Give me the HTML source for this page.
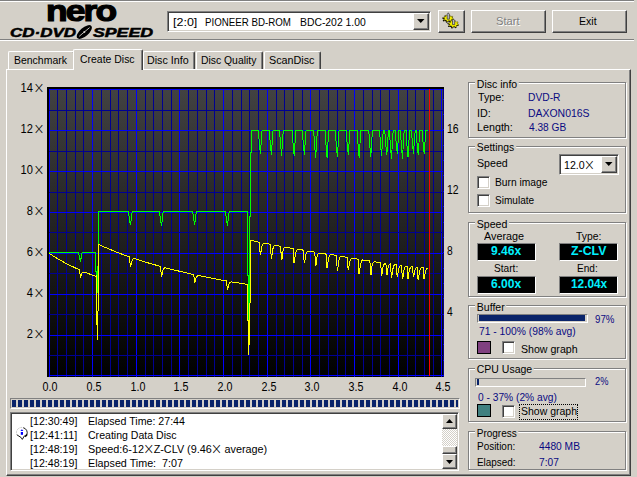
<!DOCTYPE html>
<html><head><meta charset="utf-8"><title>Nero CD-DVD Speed</title>
<style>
html,body{margin:0;padding:0;}
body{width:637px;height:477px;overflow:hidden;background:#d4d0c8;position:relative;font-family:"Liberation Sans",sans-serif;font-size:11.4px;color:#000;}
.t{position:absolute;white-space:nowrap;line-height:14px;}
.x{font-family:"DejaVu Sans Light","DejaVu Sans",sans-serif;font-weight:200;font-size:15px;line-height:1px;position:relative;top:1px;margin-left:0.5px;margin-right:-2px;}
.x2{font-family:"DejaVu Sans Light","DejaVu Sans",sans-serif;font-weight:200;font-size:15px;line-height:1px;position:relative;top:1px;margin:0 -1px;}
.p{position:absolute;}
.btn{position:absolute;box-sizing:border-box;border:1px solid;border-color:#fff #404040 #404040 #fff;box-shadow:inset -1px -1px 0 #808080;background:#d4d0c8;}
.sunk{position:absolute;box-sizing:border-box;border:1px solid;border-color:#808080 #fff #fff #808080;box-shadow:inset 1px 1px 0 #404040, inset -1px -1px 0 #d4d0c8;background:#fff;}
.thin{position:absolute;box-sizing:border-box;border:1px solid;border-color:#808080 #fff #fff #808080;}
.grp{position:absolute;box-sizing:border-box;border:1px solid #808080;box-shadow:inset 1px 1px 0 #fff, 1px 1px 0 #fff;}
.lcd{position:absolute;box-sizing:border-box;background:#000;border:1px solid;border-color:#808080 #fff #fff #808080;}
.plot{position:absolute;left:47px;top:87px;}
.tab{position:absolute;box-sizing:border-box;border:1px solid;border-color:#fff #404040 transparent #fff;border-bottom:none;border-radius:2px 2px 0 0;box-shadow:inset -1px 0 0 #808080;background:#d4d0c8;}
</style></head><body>
<!-- top lines -->
<div class="p" style="left:0;top:0;width:634px;height:1px;background:#808080"></div>
<div class="p" style="left:0;top:1px;width:634px;height:1px;background:#fff"></div>
<div class="p" style="left:0;top:39px;width:634px;height:1px;background:#808080"></div>
<div class="p" style="left:0;top:40px;width:634px;height:1px;background:#fff"></div>
<!-- logo -->
<div class="t" id="nero" style="left:46px;top:-8.6px;font-size:30px;line-height:40px;font-weight:bold;letter-spacing:-1.6px;-webkit-text-stroke:1.2px #000;transform:scaleX(1.18);transform-origin:0 0;">nero</div>
<div class="t" style="left:10px;top:24.5px;font-size:12.3px;line-height:16px;font-weight:bold;font-style:italic;-webkit-text-stroke:0.5px #000;transform:scaleX(1.38);transform-origin:0 0;">CD·DVD</div>
<div class="t" style="left:93px;top:24.5px;font-size:12.3px;line-height:16px;font-weight:bold;font-style:italic;-webkit-text-stroke:0.5px #000;transform:scaleX(1.44);transform-origin:0 0;">SPEED</div>
<svg class="p" style="left:74px;top:24px" width="22" height="16" viewBox="0 0 22 16"><ellipse cx="10.3" cy="8" rx="9.3" ry="4.3" transform="rotate(-41 10.3 8)" fill="#000"/><path d="M5.2 12.3 L15.6 3.6" stroke="#d4d0c8" stroke-width="0.9"/><circle cx="10.3" cy="8" r="1" fill="#d4d0c8"/></svg>
<!-- combo -->
<div class="sunk" style="left:167px;top:11px;width:264px;height:21px;"></div>
<div class="btn" style="left:413px;top:13px;width:16px;height:17px;"></div>
<svg class="p" style="left:417px;top:19px" width="8" height="4"><polygon points="0,0 7.5,0 3.75,4" fill="#000"/></svg>
<!-- buttons -->
<div class="btn" style="left:438px;top:10px;width:27px;height:23px;"></div>
<div class="btn" style="left:471px;top:10px;width:75px;height:23px;"></div>
<div class="btn" style="left:552px;top:10px;width:75px;height:23px;"></div>
<!-- gear icon -->
<svg class="p" style="left:438px;top:10px" width="27" height="23" viewBox="0 0 27 23">
<path d="M14.02 8.90 L15.47 9.27 L15.15 10.25 L13.60 10.15 L12.78 10.94 L13.43 11.91 L12.19 12.44 L11.20 11.62 L9.80 11.79 L9.26 12.78 L7.83 12.56 L7.97 11.50 L6.82 10.94 L5.41 11.39 L4.62 10.53 L5.82 9.86 L5.58 8.90 L4.13 8.53 L4.45 7.55 L6.00 7.65 L6.82 6.86 L6.17 5.89 L7.41 5.36 L8.40 6.18 L9.80 6.01 L10.34 5.02 L11.77 5.24 L11.63 6.30 L12.78 6.86 L14.19 6.41 L14.98 7.27 L13.78 7.94Z" fill="#000"/><path d="M14.15 8.30 L15.48 8.62 L15.18 9.48 L13.77 9.39 L13.02 10.08 L13.61 10.92 L12.48 11.39 L11.57 10.67 L10.30 10.82 L9.81 11.68 L8.50 11.49 L8.63 10.57 L7.58 10.08 L6.29 10.47 L5.58 9.72 L6.67 9.13 L6.45 8.30 L5.12 7.98 L5.42 7.12 L6.83 7.21 L7.58 6.52 L6.99 5.68 L8.12 5.21 L9.03 5.93 L10.30 5.78 L10.79 4.92 L12.10 5.11 L11.97 6.03 L13.02 6.52 L14.31 6.13 L15.02 6.88 L13.93 7.47Z" fill="#f4f000" stroke="#403800" stroke-width="0.4"/>
<path d="M9.2 9.2 V4.4 L10.3 2.8 L11.4 4.4 V9.2 Z" fill="#b8b8c8" stroke="#303030" stroke-width="0.7"/>
<path d="M19.22 14.50 L20.67 14.89 L20.35 15.92 L18.80 15.81 L17.98 16.65 L18.63 17.66 L17.39 18.22 L16.40 17.36 L15.00 17.53 L14.46 18.58 L13.03 18.35 L13.17 17.24 L12.02 16.65 L10.61 17.11 L9.82 16.22 L11.02 15.51 L10.78 14.50 L9.33 14.11 L9.65 13.08 L11.20 13.19 L12.02 12.35 L11.37 11.34 L12.61 10.78 L13.60 11.64 L15.00 11.47 L15.54 10.42 L16.97 10.65 L16.83 11.76 L17.98 12.35 L19.39 11.89 L20.18 12.78 L18.98 13.49Z" fill="#000"/><path d="M19.35 13.90 L20.68 14.24 L20.38 15.15 L18.97 15.05 L18.22 15.78 L18.81 16.67 L17.68 17.17 L16.77 16.41 L15.50 16.56 L15.01 17.48 L13.70 17.28 L13.83 16.30 L12.78 15.78 L11.49 16.19 L10.78 15.41 L11.87 14.78 L11.65 13.90 L10.32 13.56 L10.62 12.65 L12.03 12.75 L12.78 12.02 L12.19 11.13 L13.32 10.63 L14.23 11.39 L15.50 11.24 L15.99 10.32 L17.30 10.52 L17.17 11.50 L18.22 12.02 L19.51 11.61 L20.22 12.39 L19.13 13.02Z" fill="#f4f000" stroke="#403800" stroke-width="0.4"/>
<path d="M14.5 14.6 V10.6 L15.6 9.2 L16.7 10.6 V14.6 Z" fill="#b8b8c8" stroke="#303030" stroke-width="0.7"/>
</svg>
<!-- tab panel -->
<div class="p" style="left:6px;top:69px;width:625px;height:407px;box-sizing:border-box;border:1px solid;border-color:#fff #404040 #404040 #fff;box-shadow:inset -1px -1px 0 #808080;"></div>
<!-- tabs -->
<div class="tab" style="left:8px;top:51px;width:67px;height:18px;"></div>
<div class="tab" style="left:143px;top:51px;width:52px;height:18px;"></div>
<div class="tab" style="left:196px;top:51px;width:67px;height:18px;"></div>
<div class="tab" style="left:264px;top:51px;width:57px;height:18px;"></div>
<div class="tab" style="left:73px;top:49px;width:70px;height:21px;"></div>
<!-- progress bar -->
<div class="thin" style="left:10px;top:398px;width:450px;height:11px;"></div>
<div class="p" style="left:12px;top:400px;width:446px;height:7px;background:repeating-linear-gradient(90deg,#0a246a 0,#0a246a 4px,#d4d0c8 4px,#d4d0c8 6px);"></div>
<!-- log box -->
<div class="sunk" style="left:10px;top:412px;width:449px;height:59px;"></div>
<!-- scrollbar -->
<div class="p" style="left:442px;top:414px;width:15px;height:55px;background:repeating-conic-gradient(#fff 0 25%,#d4d0c8 0 50%) 0 0/2px 2px;"></div>
<div class="btn" style="left:442px;top:414px;width:15px;height:15px;"></div>
<svg class="p" style="left:446px;top:419px" width="7" height="4"><polygon points="0,4 7,4 3.5,0" fill="#000"/></svg>
<div class="btn" style="left:442px;top:446px;width:15px;height:8px;"></div>
<div class="btn" style="left:442px;top:454px;width:15px;height:15px;"></div>
<svg class="p" style="left:446px;top:460px" width="7" height="4"><polygon points="0,0 7,0 3.5,4" fill="#000"/></svg>
<!-- log icon -->
<svg class="p" style="left:15px;top:426px" width="15" height="16" viewBox="0 0 15 16"><circle cx="6.9" cy="6.8" r="5.2" fill="#fff"/><path d="M8.2 1.7 A5.2 5.2 0 0 1 11.9 8.6 L10.4 10.6 L9.4 9.9 L7.3 13.4 L6.2 11.6 L1.9 8.8" fill="none" stroke="#000" stroke-width="0.9"/><path d="M10.3 10.4 L12 8.4" stroke="#000" stroke-width="1.6"/><path d="M1.9 8.8 A5.2 5.2 0 0 1 8.2 1.7" fill="none" stroke="#a0a0a0" stroke-width="0.9" stroke-dasharray="1 1.3"/><path d="M5.4 4.9 L6.9 3.2 L8.4 4.9 Z" fill="#0000ff"/><rect x="5.8" y="6" width="2.2" height="2.8" fill="#0000ff"/></svg>
<!-- right groups -->
<div class="grp" style="left:468px;top:82px;width:158px;height:56px;"></div>
<div class="grp" style="left:468px;top:146px;width:158px;height:67px;"></div>
<div class="grp" style="left:468px;top:222px;width:158px;height:75px;"></div>
<div class="grp" style="left:468px;top:305px;width:158px;height:54px;"></div>
<div class="grp" style="left:468px;top:368px;width:158px;height:54px;"></div>
<div class="grp" style="left:468px;top:431px;width:158px;height:39px;"></div>
<!-- settings -->
<div class="sunk" style="left:559px;top:154px;width:60px;height:21px;"></div>
<div class="btn" style="left:601px;top:156px;width:16px;height:17px;"></div>
<svg class="p" style="left:605px;top:162px" width="8" height="4"><polygon points="0,0 7.5,0 3.75,4" fill="#000"/></svg>
<div class="sunk" style="left:477px;top:176px;width:13px;height:13px;"></div>
<div class="sunk" style="left:477px;top:194px;width:13px;height:13px;"></div>
<!-- speed LCDs -->
<div class="lcd" style="left:477px;top:243px;width:59px;height:18px;"></div>
<div class="lcd" style="left:559px;top:243px;width:59px;height:18px;"></div>
<div class="lcd" style="left:477px;top:276px;width:59px;height:18px;"></div>
<div class="lcd" style="left:559px;top:276px;width:59px;height:18px;"></div>
<!-- buffer -->
<div class="thin" style="left:477px;top:314px;width:111px;height:9px;"></div>
<div class="p" style="left:479px;top:315px;width:106px;height:6px;background:#0a246a;"></div>
<div class="p" style="left:477px;top:341px;width:14px;height:13px;box-sizing:border-box;border:1px solid #000;background:#804080;"></div>
<div class="sunk" style="left:502px;top:341px;width:13px;height:13px;"></div>
<!-- cpu -->
<div class="thin" style="left:475px;top:378px;width:111px;height:9px;"></div>
<div class="p" style="left:477px;top:379px;width:2px;height:6px;background:#0a246a;"></div>
<div class="p" style="left:477px;top:404px;width:14px;height:13px;box-sizing:border-box;border:1px solid #000;background:#408080;"></div>
<div class="sunk" style="left:502px;top:405px;width:13px;height:13px;"></div>
<div class="p" style="left:519px;top:404px;width:59px;height:16px;box-sizing:border-box;border:1px dotted #000;"></div>

<svg class="plot" width="397" height="290" viewBox="47 87 397 290">
<defs><linearGradient id="bg" x1="0" y1="0" x2="0" y2="1"><stop offset="0" stop-color="#424242"/><stop offset="1" stop-color="#000"/></linearGradient></defs>
<rect x="47" y="87" width="398" height="291" fill="#000"/>
<rect x="49" y="89" width="394" height="288" fill="url(#bg)"/>
<g shape-rendering="crispEdges"><rect x="49" y="89" width="1" height="288" fill="#0000ff"/>
<rect x="57" y="89" width="1" height="288" fill="#000092"/>
<rect x="66" y="89" width="1" height="288" fill="#000092"/>
<rect x="75" y="89" width="1" height="288" fill="#000092"/>
<rect x="83" y="89" width="1" height="288" fill="#000092"/>
<rect x="92" y="89" width="1" height="288" fill="#0000ff"/>
<rect x="101" y="89" width="1" height="288" fill="#000092"/>
<rect x="110" y="89" width="1" height="288" fill="#000092"/>
<rect x="118" y="89" width="1" height="288" fill="#000092"/>
<rect x="127" y="89" width="1" height="288" fill="#000092"/>
<rect x="136" y="89" width="1" height="288" fill="#0000ff"/>
<rect x="145" y="89" width="1" height="288" fill="#000092"/>
<rect x="153" y="89" width="1" height="288" fill="#000092"/>
<rect x="162" y="89" width="1" height="288" fill="#000092"/>
<rect x="171" y="89" width="1" height="288" fill="#000092"/>
<rect x="179" y="89" width="1" height="288" fill="#0000ff"/>
<rect x="188" y="89" width="1" height="288" fill="#000092"/>
<rect x="197" y="89" width="1" height="288" fill="#000092"/>
<rect x="206" y="89" width="1" height="288" fill="#000092"/>
<rect x="214" y="89" width="1" height="288" fill="#000092"/>
<rect x="223" y="89" width="1" height="288" fill="#0000ff"/>
<rect x="232" y="89" width="1" height="288" fill="#000092"/>
<rect x="241" y="89" width="1" height="288" fill="#000092"/>
<rect x="249" y="89" width="1" height="288" fill="#000092"/>
<rect x="258" y="89" width="1" height="288" fill="#000092"/>
<rect x="267" y="89" width="1" height="288" fill="#0000ff"/>
<rect x="276" y="89" width="1" height="288" fill="#000092"/>
<rect x="284" y="89" width="1" height="288" fill="#000092"/>
<rect x="293" y="89" width="1" height="288" fill="#000092"/>
<rect x="302" y="89" width="1" height="288" fill="#000092"/>
<rect x="310" y="89" width="1" height="288" fill="#0000ff"/>
<rect x="319" y="89" width="1" height="288" fill="#000092"/>
<rect x="328" y="89" width="1" height="288" fill="#000092"/>
<rect x="337" y="89" width="1" height="288" fill="#000092"/>
<rect x="345" y="89" width="1" height="288" fill="#000092"/>
<rect x="354" y="89" width="1" height="288" fill="#0000ff"/>
<rect x="363" y="89" width="1" height="288" fill="#000092"/>
<rect x="372" y="89" width="1" height="288" fill="#000092"/>
<rect x="380" y="89" width="1" height="288" fill="#000092"/>
<rect x="389" y="89" width="1" height="288" fill="#000092"/>
<rect x="398" y="89" width="1" height="288" fill="#0000ff"/>
<rect x="407" y="89" width="1" height="288" fill="#000092"/>
<rect x="415" y="89" width="1" height="288" fill="#000092"/>
<rect x="424" y="89" width="1" height="288" fill="#000092"/>
<rect x="433" y="89" width="1" height="288" fill="#000092"/>
<rect x="441" y="89" width="1" height="288" fill="#0000ff"/>
<rect x="49" y="375" width="394" height="1" fill="#0000ff"/>
<rect x="49" y="355" width="394" height="1" fill="#000092"/>
<rect x="49" y="335" width="394" height="1" fill="#0000ff"/>
<rect x="49" y="314" width="394" height="1" fill="#000092"/>
<rect x="49" y="294" width="394" height="1" fill="#0000ff"/>
<rect x="49" y="273" width="394" height="1" fill="#000092"/>
<rect x="49" y="253" width="394" height="1" fill="#0000ff"/>
<rect x="49" y="232" width="394" height="1" fill="#000092"/>
<rect x="49" y="212" width="394" height="1" fill="#0000ff"/>
<rect x="49" y="192" width="394" height="1" fill="#000092"/>
<rect x="49" y="171" width="394" height="1" fill="#0000ff"/>
<rect x="49" y="151" width="394" height="1" fill="#000092"/>
<rect x="49" y="130" width="394" height="1" fill="#0000ff"/>
<rect x="49" y="110" width="394" height="1" fill="#000092"/>
<rect x="49" y="89" width="394" height="1" fill="#0000ff"/>
<rect x="443" y="375" width="1" height="1" fill="#0000ff"/>
<rect x="443" y="360" width="1" height="1" fill="#0000ff"/>
<rect x="443" y="344" width="1" height="1" fill="#0000ff"/>
<rect x="443" y="329" width="1" height="1" fill="#0000ff"/>
<rect x="443" y="314" width="1" height="1" fill="#0000ff"/>
<rect x="443" y="298" width="1" height="1" fill="#0000ff"/>
<rect x="443" y="283" width="1" height="1" fill="#0000ff"/>
<rect x="443" y="268" width="1" height="1" fill="#0000ff"/>
<rect x="443" y="252" width="1" height="1" fill="#0000ff"/>
<rect x="443" y="237" width="1" height="1" fill="#0000ff"/>
<rect x="443" y="222" width="1" height="1" fill="#0000ff"/>
<rect x="443" y="206" width="1" height="1" fill="#0000ff"/>
<rect x="443" y="191" width="1" height="1" fill="#0000ff"/>
<rect x="443" y="175" width="1" height="1" fill="#0000ff"/>
<rect x="443" y="160" width="1" height="1" fill="#0000ff"/>
<rect x="443" y="145" width="1" height="1" fill="#0000ff"/>
<rect x="443" y="129" width="1" height="1" fill="#0000ff"/>
<rect x="443" y="114" width="1" height="1" fill="#0000ff"/>
<rect x="443" y="99" width="1" height="1" fill="#0000ff"/></g>
<rect x="443" y="89" width="0.5" height="288" fill="#0000ff"/>
<polyline points="49.0,252.4 78.5,252.4 79.2,256.5 80.5,261.5 81.3,256.9 82.2,252.4 95.7,252.4 95.7,271.0 96.6,271.0 96.6,292.0 97.4,292.0 97.6,271.0 98.6,260.0 98.6,211.5 128.5,211.5 129.2,217.8 130.5,225.4 131.3,218.4 132.2,211.5 159.5,211.5 160.2,218.2 161.5,226.4 162.3,218.9 163.2,211.5 192.7,211.5 193.4,217.5 194.7,224.8 195.5,218.2 196.4,211.5 225.5,211.5 226.2,218.0 227.5,225.9 228.3,218.7 229.2,211.5 247.6,211.5 247.6,275.0 248.5,275.0 248.5,331.6 249.5,288.0 249.5,216.5 250.8,216.5 250.8,152.5 251.5,152.5 251.5,130.2 258.4,130.2 259.1,140.8 260.4,153.7 261.2,141.9 262.1,130.2 269.4,130.2 270.1,141.1 271.4,154.5 272.2,142.3 273.1,130.2 279.6,130.2 280.3,141.7 281.6,155.8 282.4,143.0 283.3,130.2 292.2,130.2 292.9,142.0 294.2,156.4 295.0,143.3 295.9,130.2 302.4,130.2 303.1,141.1 304.4,154.5 305.2,142.3 306.1,130.2 313.7,130.2 314.4,142.6 315.7,157.7 316.5,143.9 317.4,130.2 325.1,130.2 325.8,142.6 327.1,157.7 327.9,143.9 328.8,130.2 335.4,130.2 336.1,142.4 337.4,157.4 338.2,143.8 339.1,130.2 346.3,130.2 347.0,141.5 348.3,155.3 349.1,142.8 350.0,130.2 357.2,130.2 357.9,142.6 359.2,157.7 360.0,143.9 360.9,130.2 368.8,130.2 369.5,142.2 370.8,156.9 371.6,143.6 372.5,130.2 379.6,130.2 380.3,141.8 381.6,156.0 382.4,143.1 383.3,130.2 384.8,130.2 385.5,141.5 386.8,155.3 387.6,142.8 388.5,130.2 389.5,130.2 390.2,142.9 391.5,158.5 392.3,144.3 393.2,130.2 395.3,130.2 396.0,140.8 397.3,153.8 398.1,142.0 399.0,130.2 400.5,130.2 401.2,142.9 402.5,158.5 403.3,144.3 404.2,130.2 406.0,130.2 406.7,142.3 408.0,157.0 408.8,143.6 409.7,130.2 411.5,130.2 412.2,140.8 413.5,153.8 414.3,142.0 415.2,130.2 416.2,130.2 416.9,141.5 418.2,155.3 419.0,142.8 419.9,130.2 422.2,130.2 422.9,140.8 424.2,153.8 425.0,142.0 425.9,130.2 427.8,130.2" fill="none" stroke="#00ff00" stroke-width="1" shape-rendering="crispEdges"/>
<polyline points="49.0,253.2 52.0,255.2 55.0,257.1 58.0,258.9 61.0,260.6 64.0,262.3 67.0,263.9 70.0,265.4 73.0,266.8 76.0,268.3 79.0,269.6 79.6,269.9 80.3,277.2 80.8,277.2 81.6,273.5 82.8,272.6 83.9,271.9 85.0,272.2 88.0,273.4 91.0,274.6 94.0,275.7 95.2,276.1 96.0,276.0 96.0,324.4 97.4,324.4 97.4,340.3 97.8,324.0 98.3,292.0 98.3,244.7 98.8,244.4 101.8,245.8 104.8,247.2 107.8,248.5 110.8,249.7 113.8,251.0 116.8,252.2 119.8,253.3 122.8,254.5 125.8,255.6 128.8,256.6 129.6,256.9 130.3,266.8 130.8,266.8 131.6,261.5 132.8,259.3 133.9,258.6 134.8,258.7 137.8,259.7 140.8,260.6 143.8,261.6 146.8,262.5 149.8,263.4 152.8,264.3 155.8,265.1 158.8,266.0 160.6,266.5 161.3,276.1 161.8,276.1 162.6,270.8 163.8,268.6 164.9,267.8 167.8,268.4 170.8,269.1 173.8,269.9 176.8,270.6 179.8,271.3 182.8,272.0 185.8,272.7 188.8,273.4 191.8,274.1 193.8,274.5 194.5,282.3 195.0,282.3 195.8,278.0 197.0,276.5 198.1,275.6 200.8,276.0 203.8,276.6 206.8,277.2 209.8,277.8 212.8,278.4 215.8,279.0 218.8,279.5 221.8,280.1 224.8,280.6 226.6,281.0 227.3,289.3 227.8,289.3 228.6,284.7 229.8,282.8 230.9,281.9 233.8,282.2 236.8,282.7 239.8,283.2 242.8,283.7 245.8,284.2 247.6,284.5 247.4,320.0 248.5,320.0 248.5,354.6 249.7,331.6 250.2,288.0 250.4,240.3 251.0,240.2 254.0,240.9 257.0,241.7 259.5,242.3 260.2,254.8 260.7,254.8 261.5,247.8 262.7,244.2 263.8,243.3 266.0,243.5 269.0,244.0 270.5,244.3 271.2,258.0 271.7,258.0 272.5,250.3 273.7,246.2 274.8,245.4 275.0,245.2 278.0,245.8 280.7,246.3 281.4,259.9 281.9,259.9 282.7,252.2 283.9,248.2 285.0,247.3 287.0,247.5 290.0,248.0 293.0,248.6 293.3,248.6 294.0,262.4 294.5,262.4 295.3,254.6 296.5,250.4 297.6,249.5 299.0,249.5 302.0,249.9 303.5,250.2 304.2,262.7 304.7,262.7 305.5,255.6 306.7,252.0 307.8,251.1 308.0,251.0 311.0,251.5 314.0,252.0 314.8,252.1 315.5,265.5 316.0,265.5 316.8,258.0 318.0,254.0 319.1,253.1 320.0,253.0 323.0,253.6 326.0,254.1 326.2,254.1 326.9,267.7 327.4,267.7 328.2,259.9 329.4,255.8 330.5,254.8 332.0,254.8 335.0,255.1 336.5,255.3 337.2,270.3 337.7,270.3 338.5,261.8 339.7,257.2 340.8,256.4 341.0,256.2 344.0,256.8 347.0,257.3 347.4,257.4 348.1,269.2 348.6,269.2 349.4,262.6 350.6,259.3 351.7,258.4 353.0,258.4 356.0,258.9 358.3,259.2 359.0,273.5 359.5,273.5 360.3,265.4 361.5,261.0 362.6,260.0 365.0,260.2 368.0,260.7 369.9,261.0 370.6,274.2 371.1,274.2 371.9,266.7 373.1,262.8 374.2,261.8 377.0,262.1 380.0,262.5 380.7,262.6 381.4,275.0 381.9,275.0 382.7,268.0 383.9,264.4 385.0,263.5 385.9,263.4 386.6,274.2 387.1,274.2 387.9,268.1 389.1,265.1 390.2,264.2 390.6,264.0 391.3,277.4 391.8,277.4 392.6,269.8 393.8,265.8 394.9,264.8 396.4,264.8 397.1,276.6 397.6,276.6 398.4,269.9 399.6,266.4 400.7,265.5 401.0,265.3 401.6,265.4 402.3,278.6 402.8,278.6 403.6,271.0 404.8,267.0 405.9,266.0 407.0,266.0 407.1,266.0 407.8,278.2 408.3,278.2 409.1,271.2 410.3,267.6 411.4,266.6 412.6,266.6 413.3,276.6 413.8,276.6 414.6,270.9 415.8,268.2 416.9,267.2 417.3,267.1 418.0,279.0 418.5,279.0 419.3,272.2 420.5,268.6 421.6,267.6 422.0,267.5 423.3,267.6 424.0,278.6 424.5,278.6 425.3,272.3 426.5,269.1 427.6,268.1 428.0,268.0 428.4,268.0" fill="none" stroke="#ffff00" stroke-width="1" shape-rendering="crispEdges"/>
<rect x="429" y="89" width="1" height="287" fill="#ff0000" shape-rendering="crispEdges"/>
</svg>
<div class="t" style="left:172.8px;top:14.8px;font-size:11.8px;transform:scaleX(1.058);transform-origin:0 0;">[2:0]</div>
<div class="t" style="left:205.4px;top:14.8px;font-size:11.8px;transform:scaleX(0.825);transform-origin:0 0;">PIONEER BD-ROM</div>
<div class="t" style="left:299.9px;top:14.8px;font-size:11.8px;transform:scaleX(0.879);transform-origin:0 0;">BDC-202 1.00</div>
<div class="t" style="left:495.5px;top:13.7px;font-size:11.8px;color:#808080;text-shadow:1px 1px 0 #fff;transform:scaleX(0.943);transform-origin:0 0;">Start</div>
<div class="t" style="left:578.7px;top:13.7px;font-size:11.8px;transform:scaleX(0.895);transform-origin:0 0;">Exit</div>
<div class="t" style="left:14.2px;top:53.3px;font-size:11.8px;transform:scaleX(0.887);transform-origin:0 0;">Benchmark</div>
<div class="t" style="left:80.1px;top:51.7px;font-size:11.8px;transform:scaleX(0.886);transform-origin:0 0;">Create Disc</div>
<div class="t" style="left:146.9px;top:53.3px;font-size:11.8px;transform:scaleX(0.906);transform-origin:0 0;">Disc Info</div>
<div class="t" style="left:201.0px;top:53.3px;font-size:11.8px;transform:scaleX(0.879);transform-origin:0 0;">Disc Quality</div>
<div class="t" style="left:269.2px;top:53.3px;font-size:11.8px;transform:scaleX(0.913);transform-origin:0 0;">ScanDisc</div>
<div class="t" style="left:42.6px;top:326.9px;font-size:12.2px;transform:translateX(-100%) scaleX(0.910);transform-origin:100% 0;">2<span class="x">&#215;</span></div>
<div class="t" style="left:42.6px;top:285.9px;font-size:12.2px;transform:translateX(-100%) scaleX(0.910);transform-origin:100% 0;">4<span class="x">&#215;</span></div>
<div class="t" style="left:42.6px;top:244.9px;font-size:12.2px;transform:translateX(-100%) scaleX(0.910);transform-origin:100% 0;">6<span class="x">&#215;</span></div>
<div class="t" style="left:42.6px;top:203.9px;font-size:12.2px;transform:translateX(-100%) scaleX(0.910);transform-origin:100% 0;">8<span class="x">&#215;</span></div>
<div class="t" style="left:42.6px;top:162.9px;font-size:12.2px;transform:translateX(-100%) scaleX(0.910);transform-origin:100% 0;">10<span class="x">&#215;</span></div>
<div class="t" style="left:42.6px;top:121.9px;font-size:12.2px;transform:translateX(-100%) scaleX(0.910);transform-origin:100% 0;">12<span class="x">&#215;</span></div>
<div class="t" style="left:42.6px;top:80.6px;font-size:12.2px;transform:translateX(-100%) scaleX(0.910);transform-origin:100% 0;">14<span class="x">&#215;</span></div>
<div class="t" style="left:446.6px;top:121.6px;font-size:12.5px;transform:scaleX(0.834);transform-origin:0 0;">16</div>
<div class="t" style="left:446.6px;top:182.6px;font-size:12.5px;transform:scaleX(0.834);transform-origin:0 0;">12</div>
<div class="t" style="left:446.6px;top:243.7px;font-size:12.5px;transform:scaleX(0.820);transform-origin:0 0;">8</div>
<div class="t" style="left:446.6px;top:305.0px;font-size:12.5px;transform:scaleX(0.820);transform-origin:0 0;">4</div>
<div class="t" style="left:50.3px;top:379.9px;font-size:12.0px;transform:translateX(-50%) scaleX(0.893);transform-origin:50% 0;">0.0</div>
<div class="t" style="left:94.0px;top:379.9px;font-size:12.0px;transform:translateX(-50%) scaleX(0.893);transform-origin:50% 0;">0.5</div>
<div class="t" style="left:137.6px;top:379.9px;font-size:12.0px;transform:translateX(-50%) scaleX(0.893);transform-origin:50% 0;">1.0</div>
<div class="t" style="left:181.3px;top:379.9px;font-size:12.0px;transform:translateX(-50%) scaleX(0.893);transform-origin:50% 0;">1.5</div>
<div class="t" style="left:225.0px;top:379.9px;font-size:12.0px;transform:translateX(-50%) scaleX(0.893);transform-origin:50% 0;">2.0</div>
<div class="t" style="left:268.6px;top:379.9px;font-size:12.0px;transform:translateX(-50%) scaleX(0.893);transform-origin:50% 0;">2.5</div>
<div class="t" style="left:312.3px;top:379.9px;font-size:12.0px;transform:translateX(-50%) scaleX(0.893);transform-origin:50% 0;">3.0</div>
<div class="t" style="left:356.0px;top:379.9px;font-size:12.0px;transform:translateX(-50%) scaleX(0.893);transform-origin:50% 0;">3.5</div>
<div class="t" style="left:399.6px;top:379.9px;font-size:12.0px;transform:translateX(-50%) scaleX(0.893);transform-origin:50% 0;">4.0</div>
<div class="t" style="left:443.3px;top:379.9px;font-size:12.0px;transform:translateX(-50%) scaleX(0.893);transform-origin:50% 0;">4.5</div>
<div class="t" style="left:30.1px;top:414.0px;font-size:11.8px;transform:scaleX(0.903);transform-origin:0 0;">[12:30:49]</div>
<div class="t" style="left:88.0px;top:414.0px;font-size:11.8px;transform:scaleX(0.901);transform-origin:0 0;">Elapsed Time: 27:44</div>
<div class="t" style="left:30.1px;top:427.8px;font-size:11.8px;transform:scaleX(0.918);transform-origin:0 0;">[12:41:11]</div>
<div class="t" style="left:88.4px;top:427.8px;font-size:11.8px;transform:scaleX(0.895);transform-origin:0 0;">Creating Data Disc</div>
<div class="t" style="left:30.1px;top:441.7px;font-size:11.8px;transform:scaleX(0.903);transform-origin:0 0;">[12:48:19]</div>
<div class="t" style="left:88.4px;top:441.7px;font-size:11.8px;transform:scaleX(0.917);transform-origin:0 0;">Speed:6-12<span class="x2">&#215;</span>Z-CLV (9.46<span class="x2">&#215;</span> average)</div>
<div class="t" style="left:30.1px;top:455.5px;font-size:11.8px;transform:scaleX(0.903);transform-origin:0 0;">[12:48:19]</div>
<div class="t" style="left:88.0px;top:455.5px;font-size:11.8px;transform:scaleX(0.911);transform-origin:0 0;">Elapsed Time:&nbsp; 7:07</div>
<div class="t" style="left:476.9px;top:76.5px;font-size:11.8px;background:#d4d0c8;padding:0 2px;margin-left:-2px;transform:scaleX(0.893);transform-origin:0 0;">Disc info</div>
<div class="t" style="left:477.7px;top:90.3px;font-size:11.8px;transform:scaleX(0.910);transform-origin:0 0;">Type:</div>
<div class="t" style="left:528.1px;top:90.3px;font-size:11.8px;color:#0a0a82;transform:scaleX(0.870);transform-origin:0 0;">DVD-R</div>
<div class="t" style="left:477.3px;top:106.3px;font-size:11.8px;transform:scaleX(0.910);transform-origin:0 0;">ID:</div>
<div class="t" style="left:528.1px;top:106.3px;font-size:11.8px;color:#0a0a82;transform:scaleX(0.886);transform-origin:0 0;">DAXON016S</div>
<div class="t" style="left:477.3px;top:120.4px;font-size:11.8px;transform:scaleX(0.910);transform-origin:0 0;">Length:</div>
<div class="t" style="left:528.5px;top:120.4px;font-size:11.8px;color:#0a0a82;transform:scaleX(0.859);transform-origin:0 0;">4.38 GB</div>
<div class="t" style="left:477.3px;top:139.9px;font-size:11.8px;background:#d4d0c8;padding:0 2px;margin-left:-2px;transform:scaleX(0.877);transform-origin:0 0;">Settings</div>
<div class="t" style="left:477.3px;top:155.8px;font-size:11.8px;transform:scaleX(0.900);transform-origin:0 0;">Speed</div>
<div class="t" style="left:563.5px;top:157.5px;font-size:11.8px;transform:scaleX(0.900);transform-origin:0 0;">12.0<span class="x2">&#215;</span></div>
<div class="t" style="left:494.9px;top:175.1px;font-size:11.8px;transform:scaleX(0.869);transform-origin:0 0;">Burn image</div>
<div class="t" style="left:495.3px;top:193.0px;font-size:11.8px;transform:scaleX(0.852);transform-origin:0 0;">Simulate</div>
<div class="t" style="left:477.1px;top:216.9px;font-size:11.8px;background:#d4d0c8;padding:0 2px;margin-left:-2px;transform:scaleX(0.897);transform-origin:0 0;">Speed</div>
<div class="t" style="left:483.9px;top:228.7px;font-size:11.8px;transform:scaleX(0.915);transform-origin:0 0;">Average</div>
<div class="t" style="left:575.9px;top:228.7px;font-size:11.8px;transform:scaleX(0.877);transform-origin:0 0;">Type:</div>
<div class="t" style="left:494.0px;top:260.8px;font-size:11.8px;transform:scaleX(0.858);transform-origin:0 0;">Start:</div>
<div class="t" style="left:576.9px;top:260.8px;font-size:11.8px;transform:scaleX(0.853);transform-origin:0 0;">End:</div>
<div class="t" style="left:491.4px;top:243.7px;font-size:12px;font-weight:bold;color:#00f0ff;transform:scaleX(1.006);transform-origin:0 0;">9.46x</div>
<div class="t" style="left:570.7px;top:243.7px;font-size:12px;font-weight:bold;color:#00f0ff;transform:scaleX(1.028);transform-origin:0 0;">Z-CLV</div>
<div class="t" style="left:491.4px;top:276.5px;font-size:12px;font-weight:bold;color:#00f0ff;transform:scaleX(1.006);transform-origin:0 0;">6.00x</div>
<div class="t" style="left:570.7px;top:276.5px;font-size:12px;font-weight:bold;color:#00f0ff;transform:scaleX(0.986);transform-origin:0 0;">12.04x</div>
<div class="t" style="left:476.9px;top:299.6px;font-size:11.8px;background:#d4d0c8;padding:0 2px;margin-left:-2px;transform:scaleX(0.892);transform-origin:0 0;">Buffer</div>
<div class="t" style="left:594.5px;top:311.9px;font-size:11.8px;color:#0a0a82;transform:scaleX(0.821);transform-origin:0 0;">97%</div>
<div class="t" style="left:478.5px;top:324.4px;font-size:11.8px;color:#0a0a82;transform:scaleX(0.873);transform-origin:0 0;">71 - 100% (98% avg)</div>
<div class="t" style="left:520.6px;top:341.7px;font-size:11.8px;transform:scaleX(0.899);transform-origin:0 0;">Show graph</div>
<div class="t" style="left:477.3px;top:362.4px;font-size:11.8px;background:#d4d0c8;padding:0 2px;margin-left:-2px;transform:scaleX(0.889);transform-origin:0 0;">CPU Usage</div>
<div class="t" style="left:594.6px;top:374.4px;font-size:11.8px;color:#0a0a82;transform:scaleX(0.785);transform-origin:0 0;">2%</div>
<div class="t" style="left:478.2px;top:389.5px;font-size:11.8px;color:#0a0a82;transform:scaleX(0.865);transform-origin:0 0;">0 - 37% (2% avg)</div>
<div class="t" style="left:520.9px;top:404.3px;font-size:11.8px;transform:scaleX(0.889);transform-origin:0 0;">Show graph</div>
<div class="t" style="left:477.2px;top:425.5px;font-size:11.8px;background:#d4d0c8;padding:0 2px;margin-left:-2px;transform:scaleX(0.849);transform-origin:0 0;">Progress</div>
<div class="t" style="left:477.2px;top:439.4px;font-size:11.8px;transform:scaleX(0.844);transform-origin:0 0;">Position:</div>
<div class="t" style="left:538.8px;top:439.4px;font-size:11.8px;color:#0a0a82;transform:scaleX(0.868);transform-origin:0 0;">4480 MB</div>
<div class="t" style="left:477.2px;top:455.4px;font-size:11.8px;transform:scaleX(0.841);transform-origin:0 0;">Elapsed:</div>
<div class="t" style="left:538.8px;top:455.4px;font-size:11.8px;color:#0a0a82;transform:scaleX(0.862);transform-origin:0 0;">7:07</div>
</body></html>
